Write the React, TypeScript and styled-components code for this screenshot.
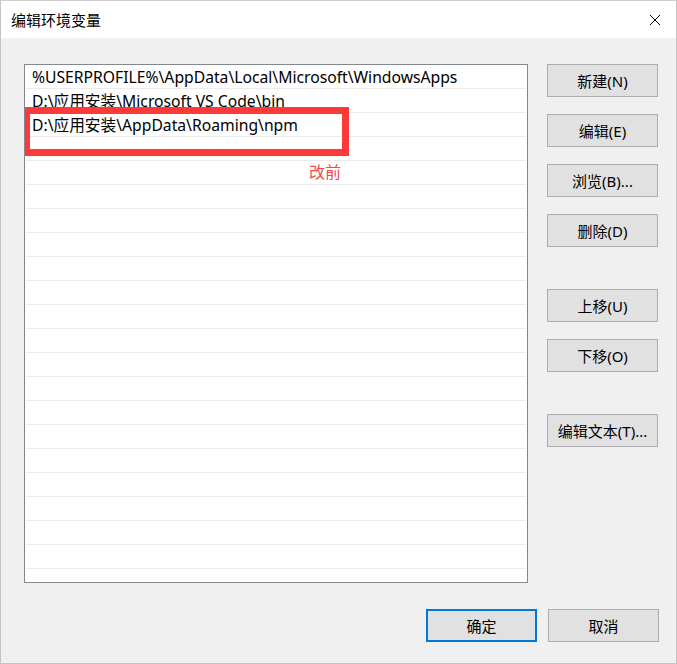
import React from "react";
import styled, { createGlobalStyle } from "styled-components";

const Global = createGlobalStyle`
  html, body { margin: 0; padding: 0; background: #f0f0f0; }
  body { font-family: "Noto Sans", "Noto Sans CJK SC", sans-serif; }
  * { box-sizing: border-box; }
`;

const FONT = `"Noto Sans", "Noto Sans CJK SC", sans-serif`;

const Window = styled.div`
  width: 677px;
  height: 664px;
  border: 1px solid #c4c4c4;
  border-top: 1px solid #d0d0d0;
  background: #f0f0f0;
  display: flex;
  flex-direction: column;
  font-family: ${FONT};
  color: #000;
`;

const TitleBar = styled.div`
  height: 37px;
  background: #fff;
  display: flex;
  align-items: center;
  justify-content: space-between;
  padding-left: 10px;
  padding-right: 15px;
`;

const Title = styled.span`
  font-size: 15px;
  font-family: "Noto Sans CJK SC", sans-serif;
`;

const Body = styled.div`
  display: flex;
  padding: 26px 0 0 23px;
  gap: 19px;
`;

const ListBox = styled.div`
  position: relative;
  width: 504px;
  height: 519px;
  border: 1px solid #828790;
  background: #fff;
  overflow: hidden;
`;

const Row = styled.div`
  height: 24px;
  margin: 0 1px;
  border-bottom: 1px solid #ebebeb;
  padding: 1px 0 0 6px;
  font-size: 15.7px;
  line-height: 22px;
  white-space: nowrap;
`;

const Highlight = styled.div`
  position: absolute;
  left: -2px;
  top: 42px;
  width: 326px;
  height: 49px;
  border: 7px solid #fc3a3a;
`;

const Note = styled.span`
  position: absolute;
  left: 284px;
  top: 94px;
  font-size: 16px;
  color: #f44a4a;
  font-family: "Noto Sans CJK SC", sans-serif;
`;

const ButtonColumn = styled.div`
  display: flex;
  flex-direction: column;
  width: 111px;
`;

const Btn = styled.button<{ $gap?: number; $primary?: boolean }>`
  width: 111px;
  height: 33px;
  margin-top: ${(p) => p.$gap ?? 0}px;
  background: #e1e1e1;
  border: ${(p) => (p.$primary ? "2px solid #0078d7" : "1px solid #adadad")};
  font-family: ${FONT};
  font-size: 15px;
  color: #000;
  padding: 0;
  display: flex;
  align-items: center;
  justify-content: center;
`;

const Footer = styled.div`
  display: flex;
  justify-content: flex-end;
  gap: 11px;
  padding: 26px 17px 0 0;
`;

const rows = [
  "%USERPROFILE%\\AppData\\Local\\Microsoft\\WindowsApps",
  "D:\\应用安装\\Microsoft VS Code\\bin",
  "D:\\应用安装\\AppData\\Roaming\\npm",
];

const CloseIcon = () => (
  <svg width="12" height="12" viewBox="0 0 12 12">
    <path d="M1 1 L11 11 M11 1 L1 11" stroke="#000" strokeWidth="1" fill="none" />
  </svg>
);

export default function App() {
  const all = [...rows];
  while (all.length < 22) all.push("");
  return (
    <>
      <Global />
      <Window>
        <TitleBar>
          <Title>编辑环境变量</Title>
          <CloseIcon />
        </TitleBar>
        <Body>
          <ListBox>
            {all.map((r, i) => (
              <Row key={i}>{r}</Row>
            ))}
            <Highlight />
            <Note>改前</Note>
          </ListBox>
          <ButtonColumn>
            <Btn>新建(N)</Btn>
            <Btn $gap={17}>编辑(E)</Btn>
            <Btn $gap={17}>浏览(B)...</Btn>
            <Btn $gap={17}>删除(D)</Btn>
            <Btn $gap={42}>上移(U)</Btn>
            <Btn $gap={17}>下移(O)</Btn>
            <Btn $gap={42}>编辑文本(T)...</Btn>
          </ButtonColumn>
        </Body>
        <Footer>
          <Btn $primary>确定</Btn>
          <Btn>取消</Btn>
        </Footer>
      </Window>
    </>
  );
}
